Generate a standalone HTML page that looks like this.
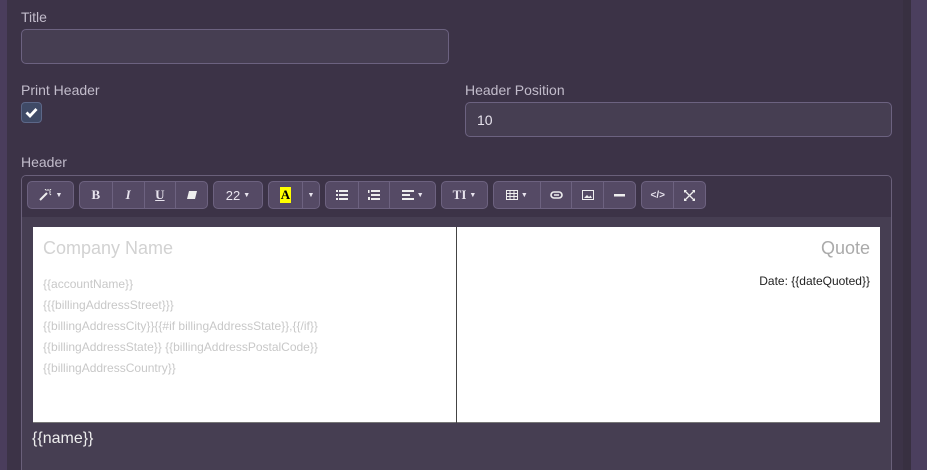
<!DOCTYPE html><html><head><style>
*{box-sizing:border-box;margin:0;padding:0}
html,body{width:927px;height:470px;overflow:hidden}
body{background:#3c3347;font-family:"Liberation Sans",sans-serif;position:relative;color:#c9c3d2}
.a{position:absolute}
.lbl{font-size:14px;color:#c2bccb}
.inp{background:#463e52;border:1px solid #6c6280;border-radius:5px}
.g{position:absolute;top:181px;height:28px;display:flex;border:1px solid #6d6280;border-radius:5px;background:#554a65;overflow:hidden}
.g div{height:100%;border-left:1px solid #6d6280;display:flex;align-items:center;justify-content:center;color:#e8e4ee;font-size:13px;font-weight:bold}
.g div:first-child{border-left:none}
.c{font-size:7px;margin-left:3px}
.t{font-size:12px;color:#c8c8c8;position:absolute;left:43px}
svg{display:block}
</style></head><body>
<div class="a" style="left:0;top:0;width:7px;height:470px;background:#4a3d5c"></div>
<div class="a" style="left:903px;top:0;width:8px;height:470px;background:#383041"></div>
<div class="a" style="left:911px;top:0;width:16px;height:470px;background:#4b3f5e"></div>
<div class="a lbl" style="left:21px;top:9px">Title</div>
<div class="a inp" style="left:21px;top:29px;width:428px;height:35px"></div>
<div class="a lbl" style="left:21px;top:82px">Print Header</div>
<div class="a" style="left:21px;top:102px;width:21px;height:21px;background:#3f4a66;border:1px solid #5c6788;border-radius:4px"><svg width="19" height="19" viewBox="0 0 19 19"><path d="M4.5 9.5l3.5 3.5 6.5-7" stroke="#fff" stroke-width="2.8" fill="none"/></svg></div>
<div class="a lbl" style="left:465px;top:82px">Header Position</div>
<div class="a inp" style="left:465px;top:102px;width:427px;height:35px;padding:9px 11px;font-size:14px;color:#e6e2ec">10</div>
<div class="a lbl" style="left:21px;top:154px">Header</div>
<div class="a" style="left:21px;top:175px;width:871px;height:295px;border:1px solid #6a607a;border-bottom:none;border-radius:5px 5px 0 0;background:#463e52;overflow:hidden">
<div style="height:41px;background:#3c3347"></div></div>
<div class="g" style="left:27px;width:47px"><div style="width:45px"><svg width="14" height="12" viewBox="0 0 14 12"><path d="M1 11L8 4" stroke="#eee" stroke-width="2"/><path d="M9 0v2M12 3h-2M12 0l-1.5 1.5M12 6l-1.5-1.5M6 0l1.5 1.5" stroke="#eee" stroke-width="1"/></svg><span class="c">▼</span></div></div>
<div class="g" style="left:79px;width:129px"><div style="width:32px;font-family:'Liberation Serif'">B</div><div style="width:32px;font-family:'Liberation Serif';font-style:italic">I</div><div style="width:32px;font-family:'Liberation Serif';text-decoration:underline">U</div><div style="width:32px"><svg width="12" height="10" viewBox="0 0 12 10"><path d="M3 1h8l-2 8H1z" fill="#eee"/></svg></div></div>
<div class="g" style="left:213px;width:50px"><div style="width:48px;font-weight:normal">22<span class="c">▼</span></div></div>
<div class="g" style="left:268px;width:52px"><div style="width:33px"><span style="background:#ff0;color:#000;font-family:'Liberation Serif';padding:0 1px">A</span></div><div style="width:17px;font-size:7px">▼</div></div>
<div class="g" style="left:325px;width:111px">
<div style="width:32px"><svg width="12" height="10" viewBox="0 0 12 10" fill="#eee"><rect x="0" y="0" width="2" height="2"/><rect x="0" y="4" width="2" height="2"/><rect x="0" y="8" width="2" height="2"/><rect x="3" y="0" width="9" height="2"/><rect x="3" y="4" width="9" height="2"/><rect x="3" y="8" width="9" height="2"/></svg></div>
<div style="width:32px"><svg width="12" height="10" viewBox="0 0 12 10" fill="#eee"><rect x="0" y="0" width="1.5" height="3"/><rect x="0" y="7" width="2" height="3"/><rect x="3" y="0" width="9" height="2"/><rect x="3" y="4" width="9" height="2"/><rect x="3" y="8" width="9" height="2"/></svg></div>
<div style="width:46px"><svg width="12" height="10" viewBox="0 0 12 10" fill="#eee"><rect x="0" y="0" width="12" height="2"/><rect x="0" y="4" width="8" height="2"/><rect x="0" y="8" width="12" height="2"/></svg><span class="c">▼</span></div></div>
<div class="g" style="left:441px;width:47px"><div style="width:45px;font-family:'Liberation Serif'">TI<span class="c">▼</span></div></div>
<div class="g" style="left:493px;width:143px">
<div style="width:46px"><svg width="12" height="10" viewBox="0 0 12 10"><rect x=".5" y=".5" width="11" height="9" fill="none" stroke="#eee"/><path d="M4 0v10M8 0v10M0 3.5h12M0 6.5h12" stroke="#eee"/></svg><span class="c">▼</span></div>
<div style="width:32px"><svg width="13" height="8" viewBox="0 0 13 8"><rect x="1" y="1" width="11" height="6" rx="3" fill="none" stroke="#eee" stroke-width="1.6"/><path d="M4 4h5" stroke="#eee" stroke-width="1.6"/></svg></div>
<div style="width:32px"><svg width="12" height="10" viewBox="0 0 12 10"><rect x=".5" y=".5" width="11" height="9" fill="none" stroke="#eee"/><path d="M2 8l3-3 2 2 1.5-1.5L10 8z" fill="#eee"/></svg></div>
<div style="width:32px"><svg width="11" height="3"><rect width="11" height="2.5" fill="#eee"/></svg></div></div>
<div class="g" style="left:641px;width:65px"><div style="width:32px;font-size:10px">&lt;/&gt;</div><div style="width:32px"><svg width="11" height="11" viewBox="0 0 11 11"><path d="M1 1l9 9M10 1l-9 9" stroke="#eee" stroke-width="1.3"/><path d="M0 0h3L0 3zM11 0v3L8 0zM0 11v-3l3 3zM11 11h-3l3-3z" fill="#eee"/></svg></div></div>
<div class="a" style="left:33px;top:227px;width:847px;height:196px;background:#fff;border-bottom:1px solid #777"></div>
<div class="a" style="left:456px;top:227px;width:1px;height:196px;background:#444"></div>
<div class="a" style="left:43px;top:238px;font-size:18px;color:#d2d2d2">Company Name</div>
<div class="a" style="right:57px;top:238px;font-size:18px;color:#aaa">Quote</div>
<div class="a" style="right:57px;top:274px;font-size:12px;color:#222">Date: {{dateQuoted}}</div>
<div class="t" style="top:277px">{{accountName}}</div>
<div class="t" style="top:298px">{{{billingAddressStreet}}}</div>
<div class="t" style="top:319px">{{billingAddressCity}}{{#if billingAddressState}},{{/if}}</div>
<div class="t" style="top:340px">{{billingAddressState}} {{billingAddressPostalCode}}</div>
<div class="t" style="top:361px">{{billingAddressCountry}}</div>
<div class="a" style="left:32px;top:430px;font-size:16px;color:#eee">{{name}}</div>
</body></html>
